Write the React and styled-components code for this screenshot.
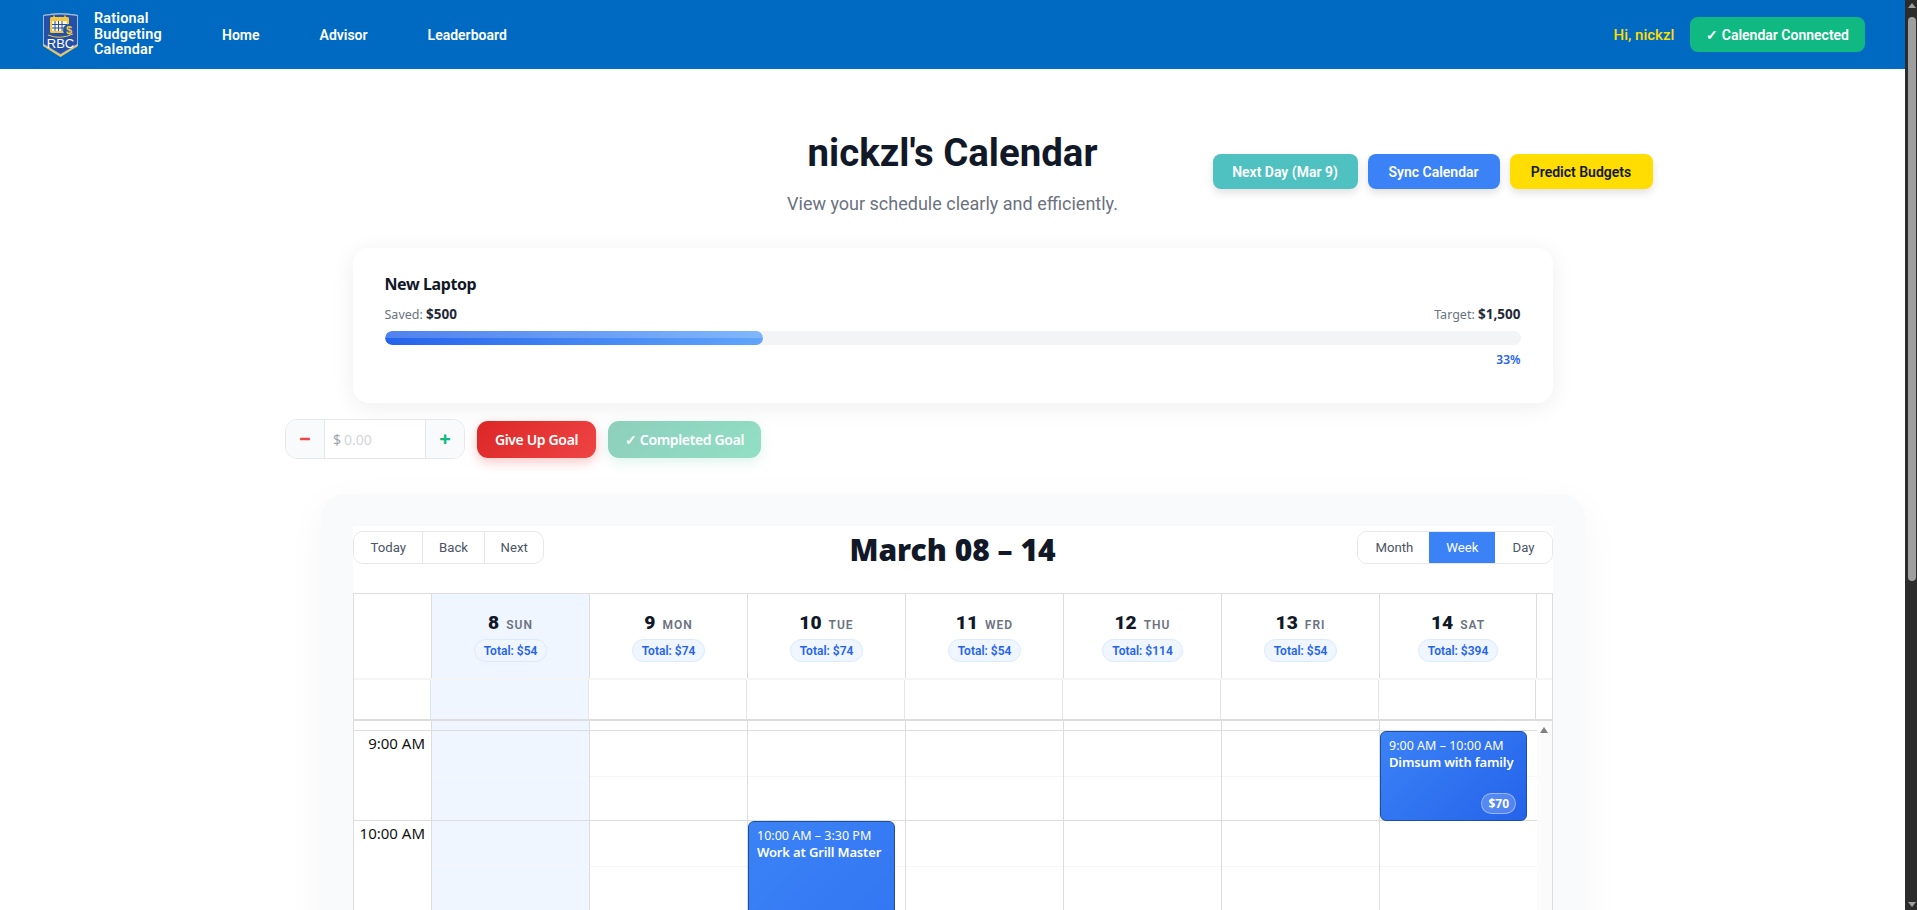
import React, { useLayoutEffect, useRef } from "react";
import styled, { createGlobalStyle } from "styled-components";

const HOUR = 90;
const BODY_FONT = `"Noto Sans", "Open Sans", sans-serif`;
const UI_FONT = `Roboto, "Liberation Sans", sans-serif`;

const GlobalStyle = createGlobalStyle`
  html { background: #fff; }
  body { margin: 0; font-family: ${BODY_FONT}; color: #111827; }
  * { box-sizing: border-box; }
`;

const Page = styled.div`
  min-height: 1417px;
  margin-right: 12px;
  background: #fff;
`;

const WindowScrollbar = styled.div`
  position: fixed;
  top: 0;
  right: 0;
  bottom: 0;
  width: 12px;
  padding: 3px 1px 3px 3px;
  display: flex;
  flex-direction: column;
  align-items: center;
  background: #2c2c2c;
`;

const WindowThumb = styled.div`
  width: 8px;
  height: 564px;
  margin-top: 9px;
  border-radius: 4px;
  background: #9f9f9f;
`;

const Arrow = styled.div`
  width: 0;
  height: 0;
  flex: none;
  border-left: ${(p) => p.$size}px solid transparent;
  border-right: ${(p) => p.$size}px solid transparent;
  border-${(p) => (p.$down ? "top" : "bottom")}: ${(p) => p.$tall}px solid ${(p) => p.$color};
  margin-top: ${(p) => (p.$down ? "auto" : "0")};
`;

const NavBar = styled.header`
  height: 69px;
  background: #006ac3;
  display: flex;
  align-items: center;
  padding: 0 40px 0 42px;
  font-family: ${UI_FONT};
`;

const Brand = styled.div`
  display: flex;
  align-items: center;
  gap: 15px;
  width: 180px;
`;

const BrandName = styled.div`
  color: #fff;
  font-size: 14.4px;
  font-weight: 600;
  line-height: 15.5px;
  letter-spacing: 0.2px;
`;

const NavLinks = styled.nav`
  display: flex;
  gap: 60px;
`;

const NavLink = styled.a`
  color: #fff;
  font-size: 14px;
  font-weight: 600;
`;

const NavRight = styled.div`
  margin-left: auto;
  display: flex;
  align-items: center;
  gap: 16px;
`;

const Greeting = styled.span`
  color: #ffdd00;
  font-size: 15px;
  font-weight: 500;
`;

const ConnectedButton = styled.button`
  height: 35px;
  padding: 0 16px;
  border: none;
  border-radius: 8px;
  background: #10b981;
  color: #fff;
  font-family: ${UI_FONT};
  font-size: 14px;
  font-weight: 600;
`;

const Main = styled.main`
  width: 1400px;
  margin: 0 auto;
  display: flex;
  flex-direction: column;
  align-items: center;
`;

const Hero = styled.section`
  width: 100%;
  display: grid;
  grid-template-columns: 1fr auto 1fr;
  padding-top: 60px;
  height: 179px;
`;

const HeroText = styled.div`
  grid-column: 2;
  text-align: center;
  font-family: ${UI_FONT};
`;

const Title = styled.h1`
  margin: 0;
  font-size: 38.4px;
  line-height: 48px;
  font-weight: 700;
  color: #111827;
`;

const Subtitle = styled.p`
  margin: 15px 0 0;
  font-size: 18px;
  line-height: 24px;
  color: #6b7280;
`;

const HeroActions = styled.div`
  grid-column: 3;
  justify-self: end;
  display: flex;
  gap: 10px;
  padding-top: 25px;
`;

const ActionButton = styled.button`
  height: 35px;
  width: ${(p) => p.$width}px;
  padding: 0;
  border: none;
  border-radius: 8px;
  background: ${(p) => p.$bg};
  color: ${(p) => p.$fg || "#fff"};
  font-family: ${UI_FONT};
  font-size: 14px;
  font-weight: 600;
  box-shadow: 0 4px 8px rgba(0, 0, 0, 0.12);
`;

const GoalCard = styled.section`
  width: 1200px;
  height: 155px;
  padding: 26px 32px 0;
  background: #fff;
  border-radius: 16px;
  box-shadow: 0 4px 24px rgba(0, 0, 0, 0.07);
`;

const GoalName = styled.h3`
  margin: 0;
  font-size: 16px;
  line-height: 20px;
  font-weight: 700;
  letter-spacing: -0.4px;
  color: #111827;
`;

const GoalNumbers = styled.div`
  display: flex;
  justify-content: space-between;
  margin-top: 10px;
  font-size: 12.5px;
  line-height: 20px;
  color: #6b7280;

  strong {
    font-size: 13.5px;
    font-weight: 700;
    color: #1f2937;
  }
`;

const ProgressTrack = styled.div`
  height: 14px;
  margin-top: 6px;
  background: #f3f4f6;
  border-radius: 7px;
  overflow: hidden;
`;

const ProgressFill = styled.div`
  position: relative;
  height: 100%;
  border-radius: 7px;
  background: linear-gradient(90deg, #2563eb, #60a5fa);

  &::after {
    content: "";
    position: absolute;
    inset: 0 0 50% 0;
    background: rgba(255, 255, 255, 0.2);
  }
`;

const Percent = styled.div`
  margin-top: 7px;
  text-align: right;
  font-size: 12px;
  line-height: 16px;
  font-weight: 600;
  color: #2563eb;
`;

const GoalControls = styled.div`
  width: 1335px;
  display: flex;
  align-items: center;
  gap: 12px;
  margin-top: 16px;
`;

const Stepper = styled.div`
  display: flex;
  height: 40px;
  width: 180px;
  border: 1.5px solid #e5e7eb;
  border-radius: 12px;
  overflow: hidden;
`;

const StepButton = styled.button`
  width: 38px;
  border: none;
  padding: 0;
  background: #f9fafb;
  color: ${(p) => p.$color};
  font-family: ${BODY_FONT};
  font-size: 20px;
  font-weight: 800;
  line-height: 1;
`;

const AmountField = styled.div`
  flex: 1;
  display: flex;
  align-items: center;
  gap: 3px;
  padding-left: 8px;
  border-left: 1.5px solid #e5e7eb;
  border-right: 1.5px solid #e5e7eb;
  font-size: 14px;
  color: #9ca3af;

  span:last-child {
    color: #d1d5db;
  }
`;

const GoalButton = styled.button`
  height: 37px;
  width: ${(p) => p.$width}px;
  padding: 0;
  border: none;
  border-radius: 11px;
  color: #fff;
  font-family: ${BODY_FONT};
  font-size: 14px;
  font-weight: 600;
  letter-spacing: -0.35px;
  background: ${(p) =>
    p.$done ? "linear-gradient(135deg, #059669, #10b981)" : "linear-gradient(135deg, #dc2626, #ef4444)"};
  opacity: ${(p) => (p.$done ? 0.45 : 1)};
  box-shadow: ${(p) => (p.$done ? "0 4px 12px rgba(16, 185, 129, 0.3)" : "0 4px 12px rgba(239, 68, 68, 0.3)")};
`;

const CalendarShell = styled.section`
  width: 1264px;
  margin-top: 35px;
  padding: 32px;
  background: #f9fafb;
  border-radius: 24px;
  box-shadow: 0 10px 40px rgba(0, 0, 0, 0.04);
`;

const Calendar = styled.div`
  height: 800px;
  display: flex;
  flex-direction: column;
  background: #fff;
`;

const Toolbar = styled.div`
  display: grid;
  grid-template-columns: 1fr auto 1fr;
  align-items: start;
  height: 67px;
  padding-top: 5px;
`;

const ButtonGroup = styled.div`
  justify-self: ${(p) => (p.$end ? "end" : "start")};
  display: flex;
  height: 33px;
  border: 1px solid #e5e7eb;
  border-radius: 10px;
  overflow: hidden;
`;

const ToolButton = styled.button`
  padding: 0 ${(p) => p.$pad}px;
  border: none;
  border-left: 1px solid ${(p) => (p.$plain ? "transparent" : "#e5e7eb")};
  background: ${(p) => (p.$active ? "#3b82f6" : "#fff")};
  color: ${(p) => (p.$active ? "#fff" : "#4b5563")};
  font-family: ${UI_FONT};
  font-size: 13.2px;
`;

const RangeTitle = styled.h2`
  margin: 1px 0 0;
  font-family: ${BODY_FONT};
  font-size: 30px;
  line-height: 36px;
  font-weight: 900;
  color: #111827;
`;

const Grid = styled.div`
  flex: 1;
  min-height: 0;
  display: flex;
  flex-direction: column;
  border: 1px solid #ddd;
  border-bottom: none;
`;

const HeaderRow = styled.div`
  display: flex;
  height: 84px;
  padding-right: 15px;
`;

const AllDayRow = styled.div`
  display: flex;
  height: 43px;
  padding-right: 15px;
  border-top: 2px solid #f5f5f5;
  border-bottom: 2px solid #ddd;
`;

const RowGutter = styled.div`
  width: 77.5px;
  flex: none;
`;

const HeaderCell = styled.div`
  width: 158px;
  flex: none;
  display: flex;
  flex-direction: column;
  align-items: center;
  padding-top: 16px;
  border-left: 1px solid #ddd;
  background: ${(p) => (p.$today ? "#eff6ff" : "#fff")};

  &:last-child {
    border-right: 1px solid #ddd;
  }
`;

const DayLabel = styled.div`
  display: flex;
  align-items: baseline;
  gap: 7px;
  font-family: ${UI_FONT};
  line-height: 26px;
`;

const DayNumber = styled.span`
  font-size: 19.2px;
  font-weight: 900;
  color: #111827;
`;

const DayName = styled.span`
  font-size: 12px;
  font-weight: 600;
  letter-spacing: 1px;
  color: #6b7280;
`;

const TotalPill = styled.span`
  margin-top: 1px;
  height: 23px;
  padding: 0 9px;
  display: flex;
  align-items: center;
  border: 1px solid #dbeafe;
  border-radius: 12px;
  background: #eff6ff;
  color: #2563eb;
  font-family: ${UI_FONT};
  font-size: 12px;
  font-weight: 600;
`;

const AllDayCell = styled.div`
  width: 158px;
  flex: none;
  margin-left: ${(p) => (p.$first ? "-1px" : "0")};
  border-left: 1px solid #e5e5e5;
  background: ${(p) => (p.$today ? "#eff6ff" : "#fff")};

  &:last-child {
    border-right: 1px solid #ddd;
  }
`;

const TimeBody = styled.div`
  flex: 1;
  min-height: 0;
  display: flex;
`;

const TimeScroller = styled.div`
  flex: 1;
  min-width: 0;
  overflow: hidden;
`;

const TimeContent = styled.div`
  display: flex;
`;

const CalendarRail = styled.div`
  width: 15px;
  flex: none;
  padding-top: 6px;
  display: flex;
  flex-direction: column;
  align-items: center;
  background: #fbfbfb;
`;

const TimeGutter = styled.div`
  width: 77.5px;
  flex: none;
`;

const TimeLabel = styled.div`
  height: ${HOUR}px;
  border-top: 1px solid #ddd;
  padding-right: 6px;
  text-align: right;
  font-size: 15px;
  line-height: 24px;
  color: #111;
`;

const DayColumn = styled.div`
  position: relative;
  width: 158px;
  flex: none;
  border-left: 1px solid #ddd;
  background: ${(p) => (p.$today ? "#eff6ff" : "#fff")};
`;

const Slot = styled.div`
  height: ${HOUR}px;
  border-top: 1px solid #ddd;

  &::after {
    content: "";
    display: block;
    height: ${HOUR / 2}px;
    border-bottom: 1px solid #f5f5f5;
  }
`;

const EventCard = styled.div`
  position: absolute;
  top: ${(p) => p.$top}px;
  left: 0;
  width: 147px;
  height: ${(p) => p.$height}px;
  padding: 5px 8px;
  border: 1px solid #1e4f9c;
  border-radius: 6px;
  background: linear-gradient(135deg, #3b82f6, #2563eb);
  color: #fff;
  overflow: hidden;
`;

const EventTime = styled.div`
  font-size: 12.5px;
  line-height: 17px;
`;

const EventTitle = styled.div`
  font-size: 13px;
  line-height: 17px;
  font-weight: 600;
  letter-spacing: -0.15px;
`;

const PriceBadge = styled.span`
  position: absolute;
  right: 10px;
  bottom: 6px;
  height: 21px;
  padding: 0 6px;
  display: flex;
  align-items: center;
  border: 1px solid rgba(255, 255, 255, 0.4);
  border-radius: 11px;
  background: rgba(255, 255, 255, 0.2);
  font-size: 12px;
  font-weight: 700;
`;

const days = [
  { num: 8, name: "SUN", total: 54, today: true },
  { num: 9, name: "MON", total: 74 },
  { num: 10, name: "TUE", total: 74 },
  { num: 11, name: "WED", total: 54 },
  { num: 12, name: "THU", total: 114 },
  { num: 13, name: "FRI", total: 54 },
  { num: 14, name: "SAT", total: 394 },
];

const events = {
  10: [{ time: "10:00 AM – 3:30 PM", title: "Work at Grill Master", start: 10, end: 15.5 }],
  14: [{ time: "9:00 AM – 10:00 AM", title: "Dimsum with family", start: 9, end: 10, price: 70 }],
};

const hours = Array.from({ length: 24 }, (_, i) => i);

const hourLabel = (h) => `${h % 12 === 0 ? 12 : h % 12}:00 ${h < 12 ? "AM" : "PM"}`;

// shield with a little gold calendar, the app's take on the bank crest
const Logo = () => (
  <svg width="37" height="46" viewBox="0 0 37 46">
    <path d="M1 3 Q18 -0.5 36 3 V34 L18.5 45 L1 34 Z" fill="#f2c94c" />
    <path d="M1 3 Q18 -0.5 36 3 V32.5 L18.5 43 L1 32.5 Z" fill="#9db7de" />
    <path d="M2 4 Q18 1 35 4 V32 L18.5 42 L2 32 Z" fill="#2450a8" />
    <rect x="8" y="5" width="19" height="16" rx="1.5" fill="#f5c73d" />
    <rect x="10" y="9" width="15" height="10" fill="#fdf6dc" />
    <path d="M13 9 V19 M16.5 9 V19 M20 9 V19 M10 12.5 H25 M10 16 H25" stroke="#2450a8" strokeWidth="1" />
    <path d="M12 3.5 V7 M23 3.5 V7" stroke="#f5c73d" strokeWidth="1.5" />
    <circle cx="27" cy="18" r="6" fill="#2450a8" />
    <text x="27" y="22" textAnchor="middle" fontFamily="Liberation Sans" fontWeight="700" fontSize="11" fill="#f5c73d">$</text>
    <path d="M6 23 Q18 28 31 22" fill="none" stroke="#f5c73d" strokeWidth="1" />
    <text x="18.5" y="36" textAnchor="middle" fontFamily="Liberation Sans" fontSize="13" fill="#fff">RBC</text>
  </svg>
);

const App = () => {
  const scrollerRef = useRef(null);

  // the grid opens scrolled to the start of the working day
  useLayoutEffect(() => {
    scrollerRef.current.scrollTop = 9 * HOUR - 9;
  }, []);

  return (
    <Page>
      <GlobalStyle />
      <NavBar>
        <Brand>
          <Logo />
          <BrandName>
            Rational
            <br />
            Budgeting
            <br />
            Calendar
          </BrandName>
        </Brand>
        <NavLinks>
          <NavLink>Home</NavLink>
          <NavLink>Advisor</NavLink>
          <NavLink>Leaderboard</NavLink>
        </NavLinks>
        <NavRight>
          <Greeting>Hi, nickzl</Greeting>
          <ConnectedButton>✓ Calendar Connected</ConnectedButton>
        </NavRight>
      </NavBar>

      <Main>
        <Hero>
          <HeroText>
            <Title>nickzl's Calendar</Title>
            <Subtitle>View your schedule clearly and efficiently.</Subtitle>
          </HeroText>
          <HeroActions>
            <ActionButton $bg="#4fc1c0" $width={145}>Next Day (Mar 9)</ActionButton>
            <ActionButton $bg="#3b82f6" $width={132}>Sync Calendar</ActionButton>
            <ActionButton $bg="#ffdd00" $fg="#111827" $width={143}>Predict Budgets</ActionButton>
          </HeroActions>
        </Hero>

        <GoalCard>
          <GoalName>New Laptop</GoalName>
          <GoalNumbers>
            <span>
              Saved: <strong>$500</strong>
            </span>
            <span>
              Target: <strong>$1,500</strong>
            </span>
          </GoalNumbers>
          <ProgressTrack>
            <ProgressFill style={{ width: `${(500 / 1500) * 100}%` }} />
          </ProgressTrack>
          <Percent>33%</Percent>
        </GoalCard>

        <GoalControls>
          <Stepper>
            <StepButton $color="#ef4444">−</StepButton>
            <AmountField>
              <span>$</span>
              <span>0.00</span>
            </AmountField>
            <StepButton $color="#10b981">+</StepButton>
          </Stepper>
          <GoalButton $width={119}>Give Up Goal</GoalButton>
          <GoalButton $done $width={153}>✓ Completed Goal</GoalButton>
        </GoalControls>

        <CalendarShell>
          <Calendar>
            <Toolbar>
              <ButtonGroup>
                <ToolButton $plain $pad={16}>Today</ToolButton>
                <ToolButton $pad={16}>Back</ToolButton>
                <ToolButton $pad={15.5}>Next</ToolButton>
              </ButtonGroup>
              <RangeTitle>March 08 – 14</RangeTitle>
              <ButtonGroup $end>
                <ToolButton $plain $pad={16}>Month</ToolButton>
                <ToolButton $plain $active $pad={16}>Week</ToolButton>
                <ToolButton $plain $pad={17}>Day</ToolButton>
              </ButtonGroup>
            </Toolbar>

            <Grid>
              <HeaderRow>
                <RowGutter />
                {days.map((d) => (
                  <HeaderCell key={d.num} $today={d.today}>
                    <DayLabel>
                      <DayNumber>{d.num}</DayNumber>
                      <DayName>{d.name}</DayName>
                    </DayLabel>
                    <TotalPill>Total: ${d.total}</TotalPill>
                  </HeaderCell>
                ))}
              </HeaderRow>
              <AllDayRow>
                <RowGutter />
                {days.map((d, i) => (
                  <AllDayCell key={d.num} $today={d.today} $first={i === 0} />
                ))}
              </AllDayRow>
              <TimeBody>
                <TimeScroller ref={scrollerRef}>
                  <TimeContent>
                    <TimeGutter>
                      {hours.map((h) => (
                        <TimeLabel key={h}>{hourLabel(h)}</TimeLabel>
                      ))}
                    </TimeGutter>
                    {days.map((d) => (
                      <DayColumn key={d.num} $today={d.today}>
                        {hours.map((h) => (
                          <Slot key={h} />
                        ))}
                        {(events[d.num] || []).map((ev) => (
                          <EventCard key={ev.title} $top={ev.start * HOUR + 1} $height={(ev.end - ev.start) * HOUR}>
                            <EventTime>{ev.time}</EventTime>
                            <EventTitle>{ev.title}</EventTitle>
                            {ev.price && <PriceBadge>${ev.price}</PriceBadge>}
                          </EventCard>
                        ))}
                      </DayColumn>
                    ))}
                  </TimeContent>
                </TimeScroller>
                <CalendarRail>
                  <Arrow $size={4.5} $tall={6} $color="#808080" />
                </CalendarRail>
              </TimeBody>
            </Grid>
          </Calendar>
        </CalendarShell>
      </Main>

      <WindowScrollbar>
        <Arrow $size={4} $tall={5} $color="#9f9f9f" />
        <WindowThumb />
        <Arrow $down $size={4} $tall={5} $color="#9f9f9f" />
      </WindowScrollbar>
    </Page>
  );
};

export default App;
